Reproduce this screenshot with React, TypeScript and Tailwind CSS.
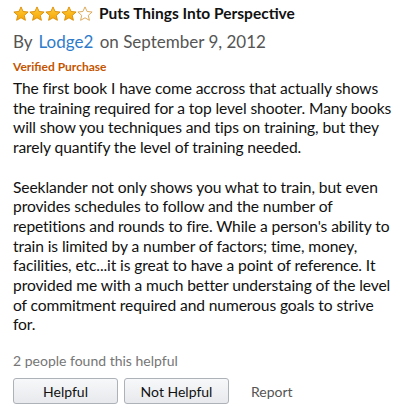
const STAR_PATH =
  'M8 0.9l2.1 4.6 5 .5-3.8 3.4 1.1 4.9L8 11.8l-4.4 2.5 1.1-4.9L.9 6l5-.5z';

function StarIcon({ filled }: { filled: boolean }) {
  return (
    <svg width="16" height="16" viewBox="0 0 16 16" className="shrink-0">
      <defs>
        <linearGradient id="starFill" x1="0" y1="0" x2="0" y2="1">
          <stop offset="0%" stopColor="#ffce3d" />
          <stop offset="100%" stopColor="#f5a300" />
        </linearGradient>
      </defs>
      <path
        d={STAR_PATH}
        fill={filled ? 'url(#starFill)' : '#ffffff'}
        stroke={filled ? '#d98a00' : '#d9a24a'}
        strokeWidth="0.9"
        strokeLinejoin="round"
      />
    </svg>
  );
}

function Rating({ value }: { value: number }) {
  return (
    <div className="flex items-center">
      {[1, 2, 3, 4, 5].map((n) => (
        <StarIcon key={n} filled={n <= value} />
      ))}
    </div>
  );
}

const body1 =
  'The first book I have come accross that actually shows the training required for a top level shooter. Many books will show you techniques and tips on training, but they rarely quantify the level of training needed.';
const body2 =
  "Seeklander not only shows you what to train, but even provides schedules to follow and the number of repetitions and rounds to fire. While a person's ability to train is limited by a number of factors; time, money, facilities, etc...it is great to have a point of reference. It provided me with a much better understaing of the level of commitment required and numerous goals to strive for.";

export default function App() {
  return (
    <div
      className="w-[402px] h-[414px] bg-white pl-[13px] pr-[4px] pt-[4px] text-[#111]"
      style={{ fontFamily: 'Lato, "Noto Sans", sans-serif' }}
    >
      {/* Header */}
      <div className="flex items-center gap-[6px] h-[20px]">
        <Rating value={4} />
        <span className="text-[15.5px] font-bold leading-none text-[#111]">
          Puts Things Into Perspective
        </span>
      </div>

      <div className="mt-[7px] text-[17px] leading-[22px] text-[#555]">
        By <span className="text-[#2f7bcb] ml-[2px] mr-[2px]">Lodge2</span> on September 9, 2012
      </div>

      <div className="mt-[6px] text-[12px] font-bold leading-[16px] text-[#c45500]">
        Verified Purchase
      </div>

      {/* Review body */}
      <div className="mt-[4px] text-[15.6px] leading-[19.7px] tracking-[-0.1px] text-[#111]">
        <p>{body1}</p>
        <p className="mt-[19.7px]">{body2}</p>
      </div>

      <div className="mt-[17px] text-[14px] leading-[18px] text-[#767676]">
        2 people found this helpful
      </div>

      {/* Actions */}
      <div className="mt-[8px] flex items-center gap-[6px]">
        <button className="w-[105px] h-[26px] rounded-[3px] border border-[#adb1b8] bg-gradient-to-b from-[#f7f8fa] to-[#e7e9ec] text-[14px] text-[#111]">
          Helpful
        </button>
        <button className="w-[105px] h-[26px] rounded-[3px] border border-[#adb1b8] bg-gradient-to-b from-[#f7f8fa] to-[#e7e9ec] text-[14px] text-[#111]">
          Not Helpful
        </button>
        <span className="ml-[16px] text-[14px] text-[#555]">Report</span>
      </div>
    </div>
  );
}
